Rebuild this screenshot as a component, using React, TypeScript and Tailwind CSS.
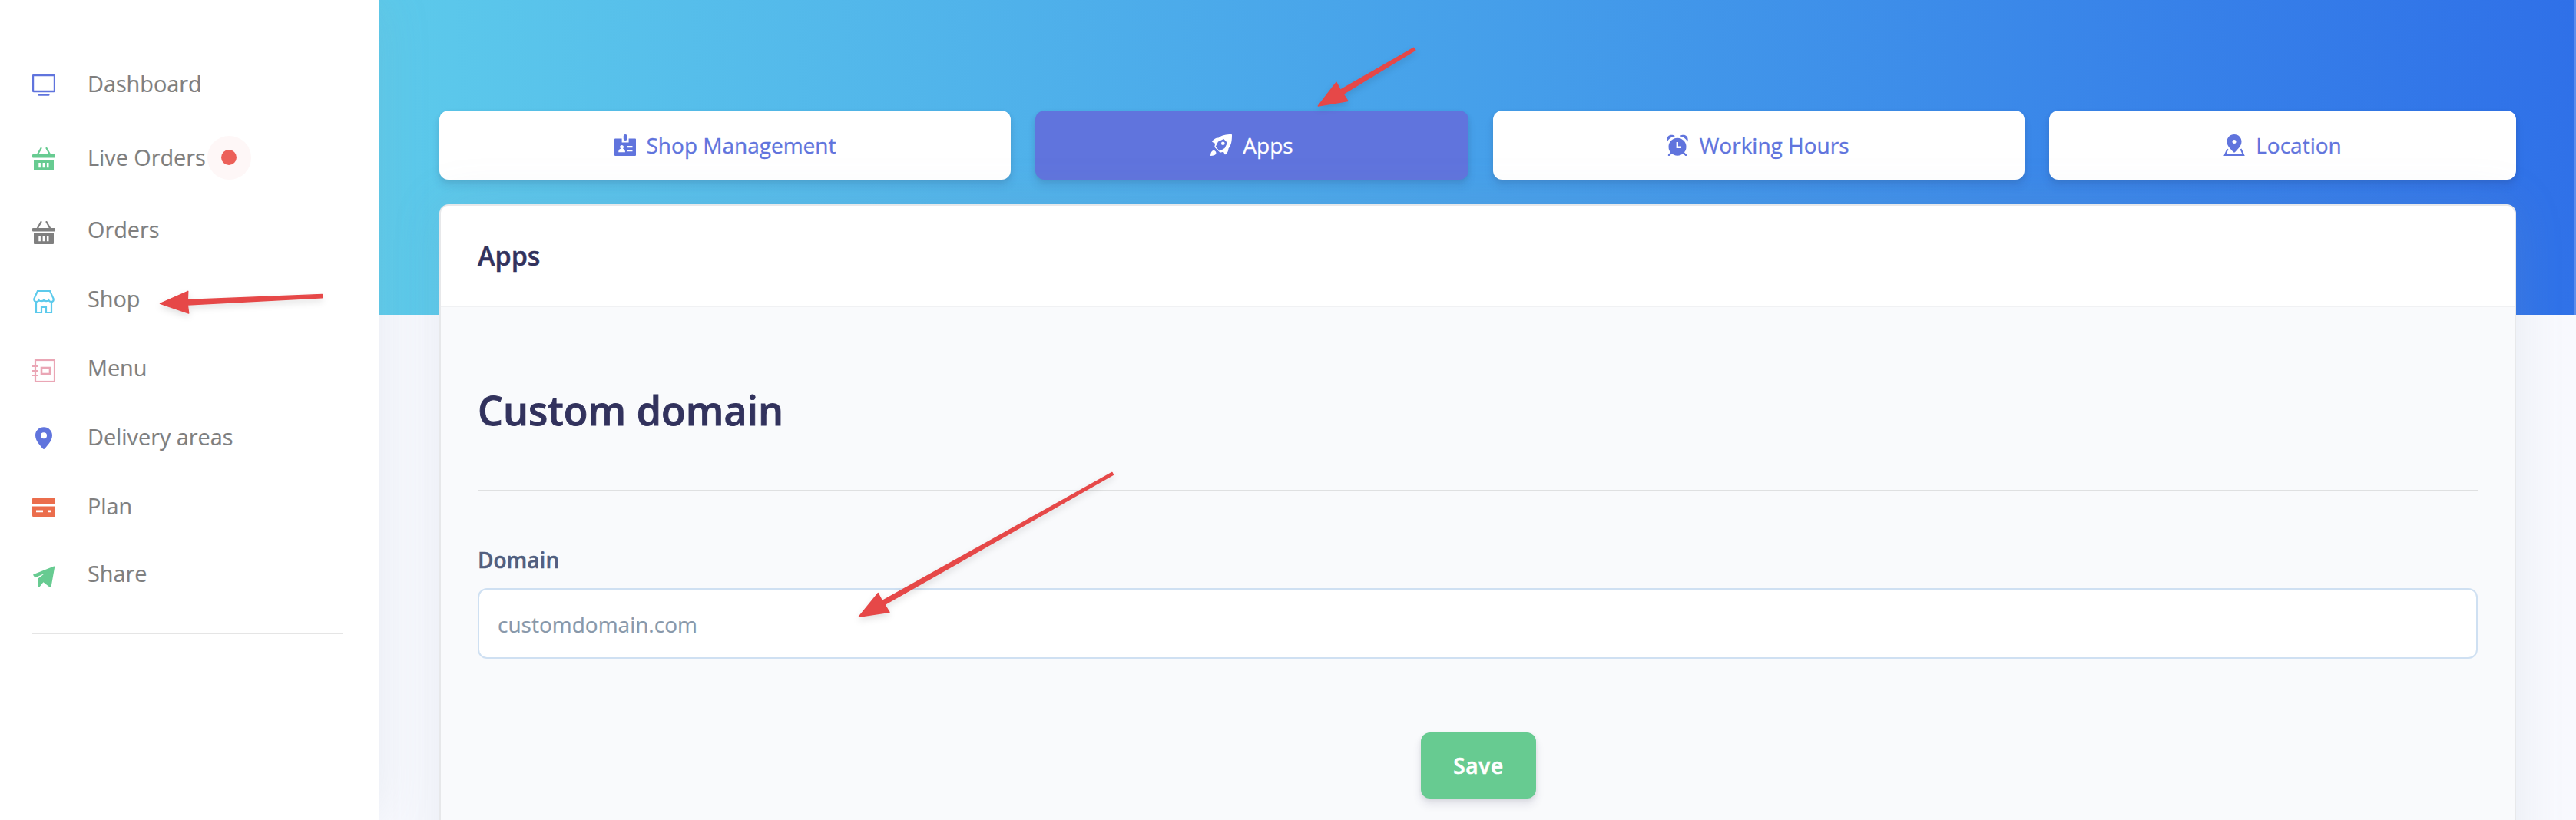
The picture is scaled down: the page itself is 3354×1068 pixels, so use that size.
import React from "react";

type IconProps = { className?: string };

function Svg({ className = "", children }: IconProps & { children: React.ReactNode }) {
  return (
    <svg viewBox="0 0 30 30" fill="currentColor" className={"block h-[30px] w-[30px] shrink-0 " + className}>
      {children}
    </svg>
  );
}

function TabSvg({ children }: { children: React.ReactNode }) {
  return (
    <svg viewBox="0 0 28 28" fill="currentColor" className="block h-7 w-7 shrink-0">
      {children}
    </svg>
  );
}

const Tv = ({ className }: IconProps) => (
  <Svg className={className}>
    <rect x="1" y="2" width="28" height="21" rx="1" fill="none" stroke="currentColor" strokeWidth="2.4" />
    <rect x="7.5" y="26" width="15" height="2.8" rx="1.2" />
  </Svg>
);

const Basket = ({ className }: IconProps) => (
  <Svg className={className}>
    <path d="M11.5 1 7 9M18.5 1 23 9" fill="none" stroke="currentColor" strokeWidth="2.2" strokeLinecap="round" />
    <rect x="0" y="9" width="30" height="4.6" rx="1" />
    <path
      fillRule="evenodd"
      d="M2 16h26v13a1 1 0 0 1-1 1H3a1 1 0 0 1-1-1zM8.3 20v6.2h2.6V20zM13.6 20v6.2h2.6V20zM18.9 20v6.2h2.6V20z"
    />
  </Svg>
);

const Shop = ({ className }: IconProps) => (
  <Svg className={className}>
    <g fill="none" stroke="currentColor" strokeWidth="2.2">
      <path d="M7 1h16l4.8 10.4c0 2-1.2 3.600-3.200 3.600-1.500 0-2.600-.8-3.200-2-.6 1.200-1.700 1.200-3.200 1.200s-2.500-.2-3.200-1.200c-.7 1-1.700 1.200-3.200 1.200s-2.600 0-3.200-1.200c-.6 1.200-1.700 2-3.200 2-2 0-3.200-1.600-3.200-3.600z" />
      <path d="M5 14v15h7v-7h6v7h7V14" />
    </g>
  </Svg>
);

const Book = ({ className }: IconProps) => (
  <Svg className={className}>
    <g fill="none" stroke="currentColor" strokeWidth="2.2">
      <rect x="4" y="1" width="25" height="28" />
      <rect x="12" y="11" width="11" height="8" strokeWidth="2.6" />
      <path d="M0 9h8M0 15h8M0 21h8" />
    </g>
  </Svg>
);

const Pin = ({ className }: IconProps) => (
  <Svg className={className}>
    <path
      fillRule="evenodd"
      d="M15 .2C8.800.2 4 5 4 11c0 7.500 7.200 14 9.700 17.300.7.900 1.900.9 2.600 0C18.800 25 26 18.500 26 11 26 5 21.200.2 15 .2zM15 7.200a4 4 0 1 1 0 8 4 4 0 0 1 0-8z"
    />
  </Svg>
);

const Card = ({ className }: IconProps) => (
  <Svg className={className}>
    <path d="M2 2h26a2 2 0 0 1 2 2v6.200H0V4a2 2 0 0 1 2-2z" />
    <path fillRule="evenodd" d="M0 13.500h30V25.500a2 2 0 0 1-2 2H2a2 2 0 0 1-2-2zM5 18.500v2.700h9v-2.700zM20 18.500v2.700h5v-2.700z" />
  </Svg>
);

const Send = ({ className }: IconProps) => (
  <Svg className={className}>
    <path d="M28.200 1.500c.7-.3 1.200.2 1 .9l-4.600 25.800c-.1.800-1.100 1.100-1.800.6l-8.400-6.600-4.400 5.600c-.9 1-2.500.7-2.500-.6V17.400l8.900-6.600-11.800 5.200c-.6.300-1.200.1-1.600-.4l-1.600-2.300c-.4-.5-.2-1.200.4-1.400z" />
  </Svg>
);

const Badge = () => (
  <TabSvg>
    <rect x="11.800" y="0" width="4.600" height="8" rx="2" />
    <path
      fillRule="evenodd"
      d="M1 5.500h8.600v5h9V5.500H27a1 1 0 0 1 1 1V27a1 1 0 0 1-1 1H1a1 1 0 0 1-1-1V6.500a1 1 0 0 1 1-1zM9.500 14c-1.500 0-2.300 1-2.300 2.300 0 1 .4 1.800 1 2.300-1.900.7-3 2-3 4.600h8.800c0-2.600-1.100-3.900-3-4.600.6-.5 1-1.300 1-2.300C12 15 11 14 9.500 14zM16.500 15v2.200h7V15zM16.500 20v2.200h7V20z"
    />
  </TabSvg>
);

const Rocket = () => (
  <TabSvg>
    <path
      fillRule="evenodd"
      d="M27 0c.7 0 1 .3 1 1 0 7-.8 13-4.500 17.500 0 3-1.500 5.500-3.700 7.500-.5.400-1 .3-1.300-.3l-1.600-2.900-4.400 1-7.300-7.300 1-4.400L2.600 10c-.5-.3-.6-.9-.2-1.300C4.500 6.300 7.200 4.400 10.500 4.600 15 .9 20.500 0 27 0zM17.300 6 10 9.500 6.700 16l5.300 5.800L18.500 18 22 11z"
    />
    <circle cx="16.300" cy="11.800" r="2.300" />
    <path d="M3.500 21c2.200-.5 4.400 1.600 3.800 4C6.800 27 4 28 0 28c0-4 1.500-6.500 3.500-7z" />
  </TabSvg>
);

const Clock = () => (
  <TabSvg>
    <path d="M.9 9.500C-1.500 3.500 4-2 11 2.200 6 3 2.500 6 .9 9.500zM27.100 9.500C29.500 3.500 24-2 17 2.200 22 3 25.500 6 27.100 9.500z" />
    <path fillRule="evenodd" d="M14 4.700a11.500 11.500 0 1 1 0 23 11.500 11.500 0 0 1 0-23zM12.600 10v8H19v-2.400h-4V10z" />
    <path d="m3 27 4-4M25 27l-4-4" stroke="currentColor" strokeWidth="2.400" strokeLinecap="round" />
  </TabSvg>
);

const MapPin = () => (
  <TabSvg>
    <path
      fillRule="evenodd"
      d="M14 0c5.500 0 9.500 4.200 9.500 9.500 0 6-5.500 10-8.300 13.500-.7.800-1.700.8-2.400 0C10 19.500 4.500 15.500 4.500 9.500 4.500 4.200 8.500 0 14 0zM14 7a2.500 2.500 0 1 0 0 5 2.500 2.500 0 0 0 0-5z"
    />
    <path d="M5.500 19 1.800 27H26.200L22.500 19" fill="none" stroke="currentColor" strokeWidth="2" />
  </TabSvg>
);

const menu = [
  { label: "Dashboard", icon: <Tv className="mt-1 text-[#6074dd]" />, gap: "" },
  { label: "Live Orders", icon: <Basket className="mt-1 text-[#67cb91]" />, gap: "mt-[54px]", live: true },
  { label: "Orders", icon: <Basket className="mt-2 text-[#7f7f7f]" />, gap: "mt-[52px]" },
  { label: "Shop", icon: <Shop className="mt-2 text-[#5ccaec]" />, gap: "mt-12" },
  { label: "Menu", icon: <Book className="mt-2 text-[#eaa6b5]" />, gap: "mt-12" },
  { label: "Delivery areas", icon: <Pin className="mt-1 text-[#6074dd]" />, gap: "mt-12" },
  { label: "Plan", icon: <Card className="mt-1 text-[#eb6d4c]" />, gap: "mt-12" },
  { label: "Share", icon: <Send className="mt-2 text-[#67cb91]" />, gap: "mt-[46px]" },
];

const tabShadow = "shadow-[0_8px_12px_rgba(50,50,93,0.11),0_2px_6px_rgba(0,0,0,0.08)]";

const tabs = [
  { label: "Shop Management", icon: <Badge />, style: "w-[744px] bg-white text-[#6074dd]" },
  { label: "Apps", icon: <Rocket />, style: "w-[564px] bg-[#6074dd] text-white" },
  { label: "Working Hours", icon: <Clock />, style: "w-[692px] bg-white pr-0.5 text-[#6074dd]" },
  { label: "Location", icon: <MapPin />, style: "w-[608px] bg-white text-[#6074dd]" },
];

function Sidebar() {
  return (
    <aside className="relative z-10 h-full w-[494px] shrink-0 bg-white px-[42px] pt-[88px] shadow-[0_0_64px_rgba(136,152,170,0.15)]">
      <nav>
        {menu.map((m) => (
          <a
            key={m.label}
            className={
              "flex h-[42px] items-center text-[28.8px] leading-[42px] text-[#7f7f7f] [-webkit-text-stroke:0.2px] " + m.gap
            }
          >
            {m.icon}
            <span className="ml-[42px] whitespace-nowrap">{m.label}</span>
            {m.live && (
              <span className="-my-2 ml-0.5 flex h-[57px] w-[57px] items-center justify-center rounded-full bg-[#fef7f7]">
                <span className="h-5 w-5 rounded-full bg-[#ec6059]" />
              </span>
            )}
          </a>
        ))}
      </nav>
      <hr className="mt-14 h-0.5 w-[404px] border-0 bg-[#e5e5e5]" />
    </aside>
  );
}

function Arrows() {
  return (
    <svg
      className="pointer-events-none absolute inset-0 z-20 h-[1068px] w-[3354px] drop-shadow-[0_4px_4px_rgba(0,0,0,0.12)]"
      viewBox="0 0 3354 1068"
      fill="#e64848"
      stroke="#e64848"
      strokeWidth="1.4"
      strokeLinejoin="round"
    >
      <path d="M208.500 395.300 244.800 379.300 244.300 390.500 419.500 383.400V387.700L244.300 397 245.700 408z" />
      <path d="M1716.300 138 1740 107.200 1745.200 117.200 1840.500 62.300 1842.800 65.300 1749 122.500 1754.800 131.500z" />
      <path d="M1118.300 803.300 1143.300 772.500 1148.500 782.600 1447.900 615.400 1449.400 618.300 1152 787.500 1158 797.300z" />
    </svg>
  );
}

export default function App() {
  return (
    <div className="relative flex h-[1068px] w-[3354px] overflow-hidden bg-[#f8f9fe] font-['Open_Sans',sans-serif]">
      <Sidebar />
      <main className="relative grow">
        <div className="absolute inset-x-0 top-0 h-[410px] border-r-2 border-[#5b8dec] bg-[linear-gradient(84deg,#5dcbeb_0%,#46a0ea_50%,#2f70e8_100%)]" />
        <div className="relative px-[78px] pt-36">
          <div className="flex gap-8">
            {tabs.map((t) => (
              <a
                key={t.label}
                className={
                  "flex h-[90px] shrink-0 items-center justify-center gap-4 rounded-xl text-[28px] leading-[42px] [-webkit-text-stroke:0.3px] " +
                  tabShadow + " " + t.style
                }
              >
                {t.icon}
                <span className="-ml-0.5 whitespace-nowrap">{t.label}</span>
              </a>
            ))}
          </div>
          <section className="relative mt-8 h-[900px] w-[2704px] rounded-xl border-2 border-black/[0.07] bg-[#f9fafc] bg-clip-border shadow-[0_0_64px_rgba(136,152,170,0.15)]">
            <header className="flex h-[132px] items-center rounded-t-[10px] border-b-2 border-[#f0f1f3] bg-white px-12">
              <h3 className="text-[34px] leading-[51px] font-semibold text-[#32325d] [-webkit-text-stroke:0.5px]">Apps</h3>
            </header>
            <div className="px-12">
              <h1 className="mt-[95px] text-[52px] leading-[78px] font-semibold text-[#32325d] [-webkit-text-stroke:0.9px]">
                Custom domain
              </h1>
              <hr className="mt-[65px] h-0.5 border-0 bg-[#dfe0e1]" />
              <label className="mt-[68px] block text-[28px] leading-[42px] font-semibold text-[#525f7f] [-webkit-text-stroke:0.4px]">
                Domain
              </label>
              <input
                className="mt-4 block h-[92px] w-full rounded-xl border-2 border-[#cfe0f2] bg-white px-6 pt-0.5 text-[28px] [-webkit-text-stroke:0.2px] placeholder:text-[#8898aa] placeholder:opacity-100"
                placeholder="customdomain.com"
              />
              <div className="mt-24 flex justify-center pl-0.5">
                <button className="h-[86px] w-[150px] rounded-xl bg-[#67cb91] text-[28px] font-semibold tracking-[0.025em] text-white shadow-[0_8px_12px_rgba(50,50,93,0.11),0_2px_6px_rgba(0,0,0,0.08)] [-webkit-text-stroke:0.6px]">
                  Save
                </button>
              </div>
            </div>
          </section>
        </div>
      </main>
      <Arrows />
    </div>
  );
}
